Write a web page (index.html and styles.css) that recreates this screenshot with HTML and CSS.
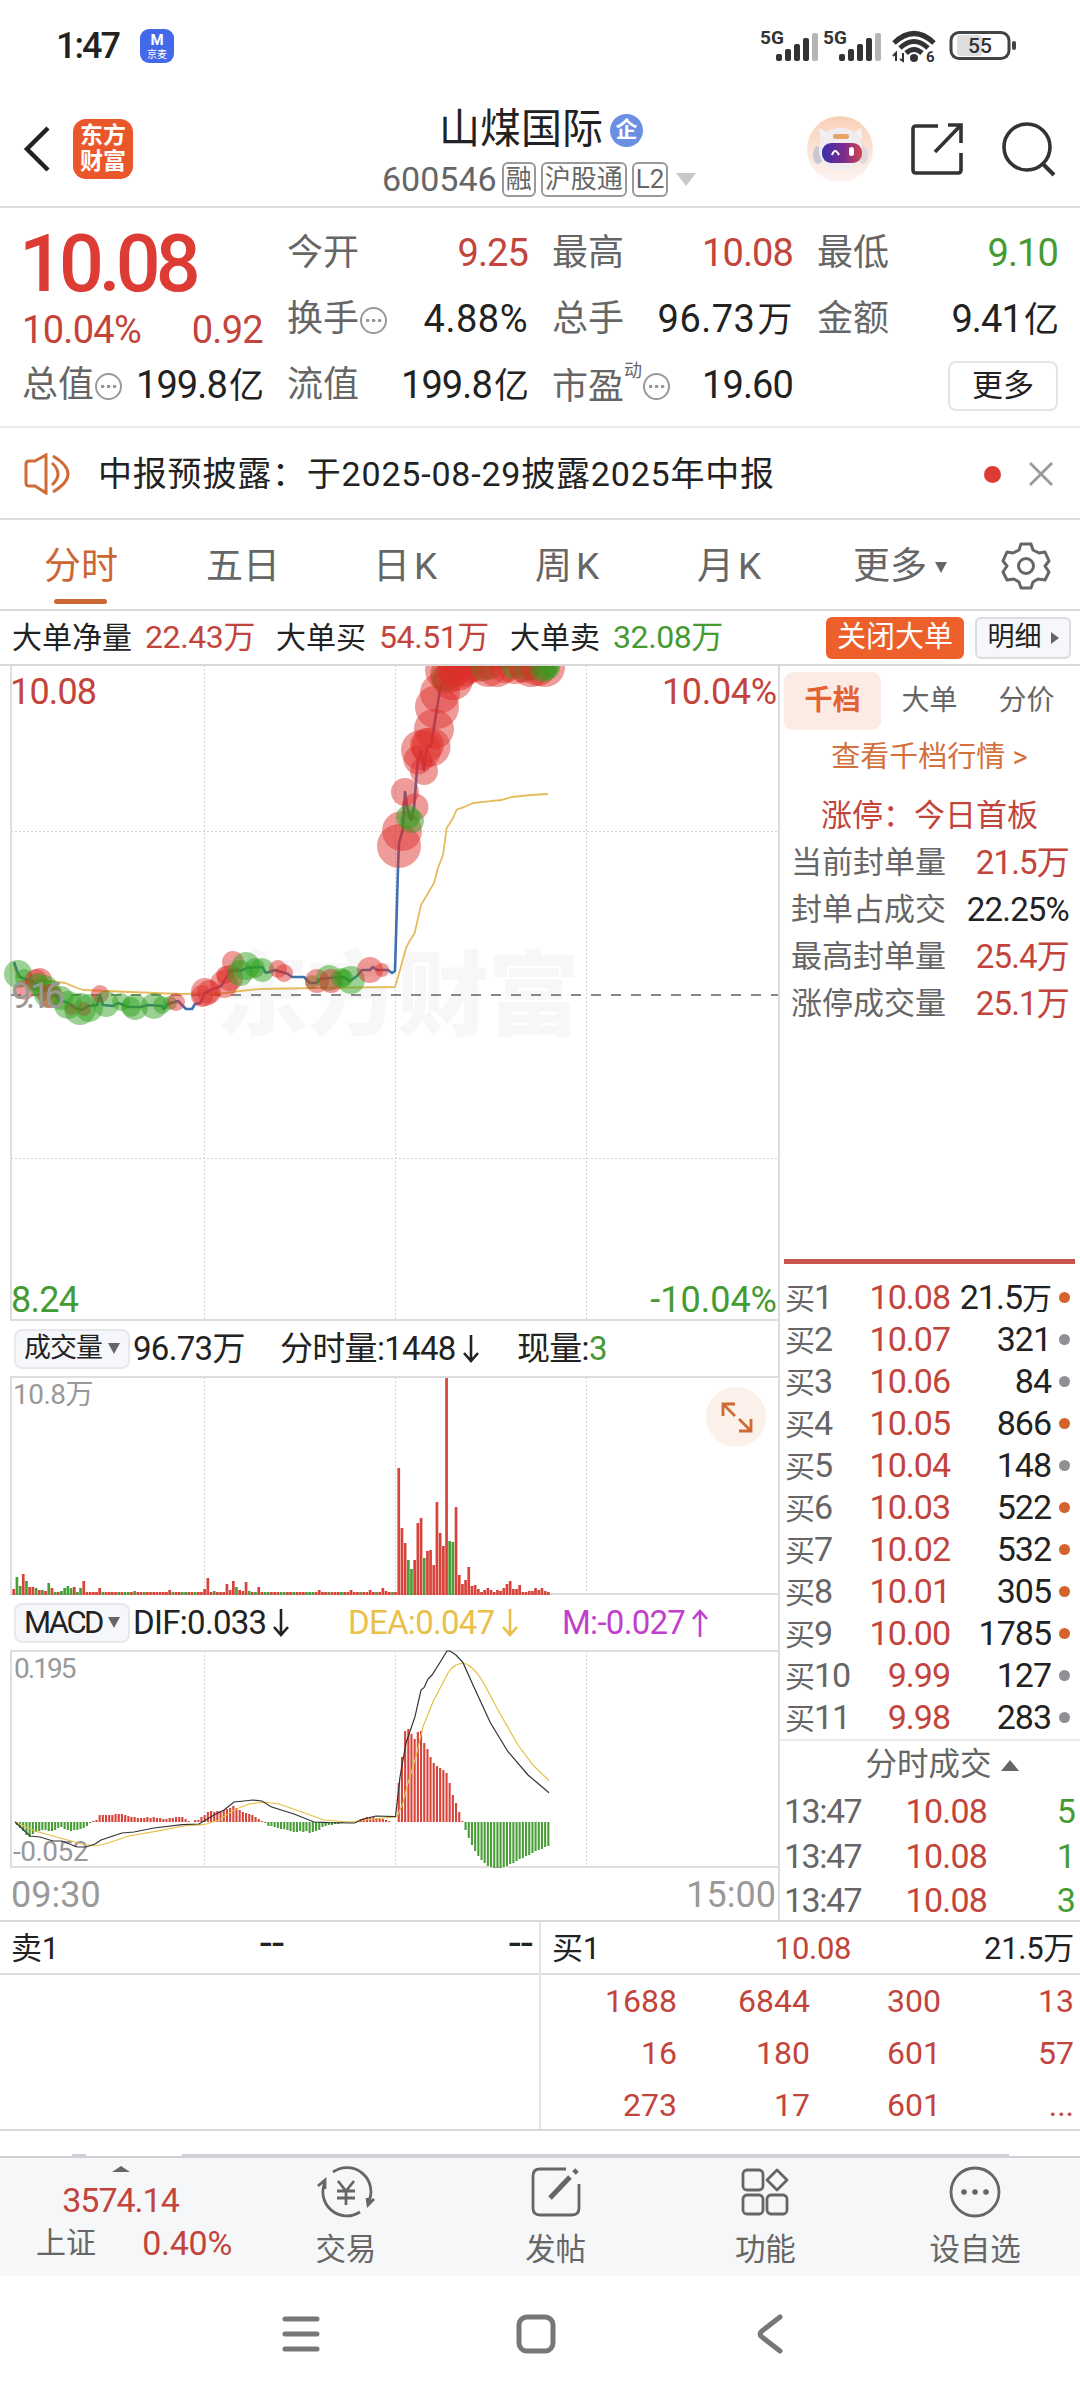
FILE: index.html
```html
<!DOCTYPE html>
<html lang="zh-CN">
<head>
    <meta charset="UTF-8">
    <meta name="viewport" content="width=device-width, initial-scale=1.0">
    <title>山煤国际 600546</title>
    <link rel="stylesheet" href="styles.css">
</head>
<body>
    <div class="status-bar">
        <span class="clock">1:47</span>
        <span class="app-chip"><b>M</b><i>京麦</i></span>
        <svg class="status-icons" width="260" height="40" viewBox="758 26 260 40">
            <g fill="#333">
                <text x="760" y="44" font-size="19" font-weight="700">5G</text>
                <text x="823" y="44" font-size="19" font-weight="700">5G</text>
                <g id="sig">
                    <rect x="776" y="54" width="6" height="7" rx="2"/>
                    <rect x="785" y="49" width="6" height="12" rx="2"/>
                    <rect x="794" y="44" width="6" height="17" rx="2"/>
                    <rect x="803" y="38" width="6" height="23" rx="2"/>
                    <rect x="812" y="33" width="6" height="28" rx="2" fill="#b5b5b5"/>
                </g>
                <use href="#sig" x="63"/>
                <circle cx="914" cy="58" r="4"/>
                <text x="926" y="62" font-size="15" font-weight="700">6</text>
                <path d="M893 56l3-3v8M903 53v8l-3-2" fill="none" stroke="#333" stroke-width="2"/>
            </g>
            <g fill="none" stroke="#333" stroke-width="5">
                <path d="M894 43q20-19 40 0"/>
                <path d="M900 48q14-13 28 0"/>
                <path d="M906 53q8-7 16 0"/>
            </g>
            <rect x="957" y="35" width="25" height="21" rx="3" fill="#ddd"/>
            <rect x="951" y="32.500" width="58" height="26" rx="8" fill="none" stroke="#444" stroke-width="3"/>
            <rect x="1012" y="41" width="4" height="9" rx="2" fill="#444"/>
            <text x="980" y="53" font-size="21" font-weight="500" fill="#333" text-anchor="middle">55</text>
        </svg>
    </div>

    <header class="header">
        <svg class="back" width="30" height="50" viewBox="0 0 30 50"><path d="M25 4L4 25l21 21" fill="none" stroke="#222" stroke-width="4.500"/></svg>
        <div class="logo">东方<br>财富</div>
        <div class="title-box">
            <div class="title">山煤国际<span class="qi">企</span></div>
            <div class="code">600546<span class="tag">融</span><span class="tag">沪股通</span><span class="tag">L2</span><i class="tri-down"></i></div>
        </div>
        <svg class="robot" width="66" height="66" viewBox="0 0 66 66">
            <defs>
                <linearGradient id="rb" x1="0" y1="0" x2="0" y2="1"><stop offset="0" stop-color="#f9d0b8"/><stop offset="1" stop-color="#fdf5f1"/></linearGradient>
                <linearGradient id="face" x1="0" y1="0" x2="1" y2="0"><stop offset="0" stop-color="#3a2fa8"/><stop offset=".55" stop-color="#7b2c8f"/><stop offset="1" stop-color="#d4454e"/></linearGradient>
            </defs>
            <circle cx="33" cy="33" r="33" fill="url(#rb)"/>
            <path d="M14 24l-2-12 9 5zM47 17l7-5 1 12z" fill="#f4f2f4"/>
            <ellipse cx="11" cy="39" rx="5" ry="9" fill="#cbc7d1"/>
            <ellipse cx="56" cy="39" rx="5" ry="9" fill="#ddd9e0"/>
            <rect x="12" y="12" width="43" height="42" rx="20" fill="#efedf0"/>
            <rect x="26" y="18" width="16" height="5" rx="2" fill="#e6a468"/>
            <rect x="15" y="27" width="40" height="20" rx="9" fill="url(#face)"/>
            <path d="M25 39q3-8 7 0" fill="none" stroke="#fff" stroke-width="2"/>
            <rect x="42" y="31" width="5" height="9" rx="2.500" fill="#fff"/>
        </svg>
        <svg class="share" width="54" height="54" viewBox="0 0 54 54"><path d="M28 4H6q-3 0-3 3v41q0 3 3 3h42q3 0 3-3V31M38 3h13v18M50 4L25 30" fill="none" stroke="#333" stroke-width="3.600"/></svg>
        <svg class="search" width="56" height="56" viewBox="0 0 56 56"><circle cx="26" cy="26" r="23" fill="none" stroke="#333" stroke-width="3.600"/><path d="M42 43l11 11" stroke="#333" stroke-width="4"/></svg>
    </header>

    <section class="quote">
        <div class="price-box">
            <div class="price">10.08</div>
            <div class="change"><span>10.04%</span><span>0.92</span></div>
        </div>
        <div class="cell"><label>今开</label><b class="up">9.25</b></div>
        <div class="cell"><label>最高</label><b class="up">10.08</b></div>
        <div class="cell"><label>最低</label><b class="down">9.10</b></div>
        <div class="cell"><label>换手</label><i class="more-dot"></i><b class="wide">4.88%</b></div>
        <div class="cell"><label>总手</label><b class="wide">96.73<em>万</em></b></div>
        <div class="cell"><label>金额</label><b>9.41<em>亿</em></b></div>
        <div class="cell"><label>总值</label><i class="more-dot"></i><b>199.8<em>亿</em></b></div>
        <div class="cell"><label>流值</label><b>199.8<em>亿</em></b></div>
        <div class="cell"><label>市盈<sup>动</sup></label><i class="more-dot"></i><b>19.60</b></div>
        <div class="cell"><span class="more-btn">更多</span></div>
    </section>

    <section class="notice">
        <svg width="48" height="42" viewBox="0 0 48 42" fill="none" stroke="#cf6c35" stroke-width="3"><path d="M2 11q0-3 3-3h6L22 2v38l-11-7H5q-3 0-3-3z"/><path d="M28 10q12 11 0 22M29 3q30 18 0 36"/></svg>
        <p>中报预披露：于2025-08-29披露2025年中报</p>
        <i class="red-dot"></i>
        <svg width="26" height="26" viewBox="0 0 26 26"><path d="M2 2l22 22M24 2L2 24" stroke="#999" stroke-width="2.800"/></svg>
    </section>

    <nav class="tabs">
        <a class="active">分时</a><a>五日</a><a>日<s>K</s></a><a>周<s>K</s></a><a>月<s>K</s></a><a class="more">更多<i class="tri-small"></i></a>
        <svg width="50" height="50" viewBox="0 0 50 50" fill="none" stroke="#666" stroke-width="3"><path d="M20 3h10l2 6 6 3 6-1 4 9-4 5 4 6-4 8-7-1-5 3-2 6H20l-2-6-5-3-7 1-4-8 4-6-4-5 4-9 6 1 6-3z" stroke-linejoin="round"/><circle cx="25" cy="25" r="7.500"/></svg>
    </nav>

    <section class="bigorder">
        <span>大单净量</span><b class="up">22.43万</b>
        <span>大单买</span><b class="up">54.51万</b>
        <span>大单卖</span><b class="down">32.08万</b>
        <a class="close-btn">关闭大单</a>
        <a class="detail-btn">明细<i class="tri-right"></i></a>
    </section>

    <main class="main">
        <div class="charts">
            <svg id="priceChart" width="778" height="655" viewBox="0 666 778 655">
                <text class="watermark" x="216" y="1028" textLength="364">东方财富</text>
            </svg>
            <div class="ind-head">
                <span class="pill"><u>成交量</u><i class="tri-ind"></i></span>
                <span class="w-vol">96.73万</span><span class="w-min">分时量:1448<svg class="arr" width="16" height="28" viewBox="0 0 16 28"><path d="M8 0v26M1 18l7 8 7-8"/></svg></span><span>现量:<b class="down">3</b></span>
            </div>
            <svg id="volChart" width="778" height="219" viewBox="0 1376 778 219"></svg>
            <div class="ind-head">
                <span class="pill"><u class="latin">MACD</u><i class="tri-ind"></i></span>
                <span class="w-dif">DIF:0.033<svg class="arr" width="16" height="28" viewBox="0 0 16 28"><path d="M8 0v26M1 18l7 8 7-8"/></svg></span><span class="w-dea">DEA:0.047<svg class="arr" width="16" height="28" viewBox="0 0 16 28"><path d="M8 0v26M1 18l7 8 7-8"/></svg></span><span class="w-m">M:-0.027<svg class="arr" width="16" height="28" viewBox="0 0 16 28"><path d="M8 28V2M1 10l7-8 7 8"/></svg></span>
            </div>
            <svg id="macdChart" width="778" height="219" viewBox="0 1650 778 219"></svg>
            <div class="times"><span>09:30</span><span>15:00</span></div>
        </div>

        <aside class="side">
            <div class="side-tabs"><a class="on">千档</a><a>大单</a><a>分价</a></div>
            <a class="side-link">查看千档行情 <span>&gt;</span></a>
            <div class="limit-title">涨停：今日首板</div>
            <dl class="limit">
                <dt>当前封单量</dt><dd class="up">21.5万</dd>
                <dt>封单占成交</dt><dd>22.25%</dd>
                <dt>最高封单量</dt><dd class="up">25.4万</dd>
                <dt>涨停成交量</dt><dd class="up">25.1万</dd>
            </dl>
            <ul class="bids" id="bids"></ul>
            <div class="ticks-title">分时成交<i class="tri-up"></i></div>
            <ul class="ticks">
                <li><span>13:47</span><b>10.08</b><em>5</em></li>
                <li><span>13:47</span><b>10.08</b><em>1</em></li>
                <li><span>13:47</span><b>10.08</b><em>3</em></li>
            </ul>
        </aside>
    </main>

    <section class="queue">
        <div class="q-sell">
            <div class="q-head"><span>卖1</span><span class="none">--</span><span class="none">--</span></div>
        </div>
        <div class="q-buy">
            <div class="q-head"><span>买1</span><span class="up">10.08</span><span>21.5万</span></div>
            <div class="q-grid">
                <span>1688</span><span>6844</span><span>300</span><span>13</span>
                <span>16</span><span>180</span><span>601</span><span>57</span>
                <span>273</span><span>17</span><span>601</span><span>...</span>
            </div>
        </div>
    </section>
    <div class="peek"><i></i><i></i></div>

    <footer class="toolbar">
        <div class="index">
            <i class="tri-up"></i>
            <b>3574.14</b>
            <p><span>上证</span><em>0.40%</em></p>
        </div>
        <a>
            <svg width="60" height="54" viewBox="-30 -27 60 54"><path d="M-13-20A24 24 0 0 1 22 11M14 20A24 24 0 0 1-21-10M28 7l-6 6-1-7M-28-6l7-6v9"/><path d="M-8-11l8 10 8-10M0-1v14M-9-1H9M-9 6H9"/></svg>
            <span>交易</span>
        </a>
        <a>
            <svg width="60" height="54" viewBox="-30 -27 60 54"><path d="M10-23h-26q-7 0-7 7v32q0 7 7 7h32q7 0 7-7V-8"/><path class="pen" d="M-6 6L14-15M18-19l3-3"/></svg>
            <span>发帖</span>
        </a>
        <a>
            <svg width="60" height="54" viewBox="-30 -27 60 54"><rect x="-22" y="-22" width="20" height="20" rx="4"/><rect x="-22" y="3" width="20" height="19" rx="4"/><rect x="2" y="3" width="20" height="19" rx="4"/><path d="M12-22l10 10-10 10-10-10z" stroke-linejoin="round"/></svg>
            <span>功能</span>
        </a>
        <a>
            <svg width="60" height="54" viewBox="-30 -27 60 54"><circle r="24"/><g fill="#666" stroke="none"><circle cx="-11" r="2.800"/><circle r="2.800"/><circle cx="11" r="2.800"/></g></svg>
            <span>设自选</span>
        </a>
    </footer>

    <div class="sysnav">
        <svg width="40" height="42" viewBox="0 0 40 42"><path d="M4 6h32M4 21h32M4 36h32"/></svg>
        <svg width="42" height="42" viewBox="0 0 42 42"><rect x="4" y="4" width="34" height="34" rx="8"/></svg>
        <svg width="28" height="42" viewBox="0 0 28 42"><path d="M24 4L6 18q-4 3 0 6l18 14"/></svg>
    </div>

    <script src="charts.js"></script>
</body>
</html>
```

FILE: styles.css
```css
* {
    box-sizing: border-box;
    margin: 0;
    padding: 0;
}
body {
    width: 1080px;
    height: 2400px;
    overflow: hidden;
    background: #fff;
    color: #222;
    font-family: Roboto, "Noto Sans CJK SC", sans-serif;
    font-size: 32px;
    line-height: 1.2;
    white-space: nowrap;
}
i, em { font-style: normal; }
b { font-weight: 400; }
s, u { text-decoration: none; }
ul { list-style: none; }
svg { display: block; flex: none; }
.up { color: #c2443b; }
.down { color: #459a32; }

/* status bar */
.status-bar {
    display: flex;
    align-items: center;
    height: 92px;
    padding: 0 62px 0 56px;
}
.clock {
    width: 84px;
    padding-top: 2px;
    font-size: 36px;
    font-weight: 500;
    letter-spacing: -2px;
}
.app-chip {
    display: flex;
    flex-direction: column;
    align-items: center;
    width: 34px;
    height: 34px;
    border-radius: 9px;
    background: #4169ea;
    color: #fff;
}
.app-chip b { font-size: 15px; line-height: 19px; font-weight: 700; margin-top: 2px; }
.app-chip i { font-size: 10px; line-height: 9px; }
.status-icons { margin-left: auto; }

/* header */
.header {
    display: flex;
    align-items: center;
    height: 116px;
    padding: 0 23px 0 23px;
    border-bottom: 2px solid #dcdcdc;
}
.back { margin-right: 20px; }
.logo {
    width: 60px;
    height: 60px;
    padding-top: 4px;
    border-radius: 13px;
    background: #ea572a;
    color: #fff;
    font-size: 23px;
    font-weight: 600;
    line-height: 26px;
    text-align: center;
}
.title-box { flex: 1; padding: 6px 0 0 249px; }
.title {
    display: flex;
    align-items: center;
    height: 54px;
    margin-left: 57px;
    font-size: 41px;
    padding-top: 3px;
}
.qi {
    width: 33px;
    height: 33px;
    margin-left: 7px;
    border-radius: 50%;
    background: #6b8fe3;
    color: #fff;
    font-size: 22px;
    font-weight: 700;
    line-height: 32px;
    text-align: center;
}
.code {
    display: flex;
    align-items: center;
    height: 47px;
    color: #666;
    font-size: 34px;
}
.tag {
    height: 35px;
    margin-left: 5px;
    padding: 0 2px;
    border: 2px solid #999;
    border-radius: 6px;
    font-size: 26px;
    line-height: 31px;
}
.tri-down {
    margin-left: 8px;
    border: 10px solid transparent;
    border-top: 13px solid #c8c8c8;
    border-bottom: 0;
}
.robot { margin-right: 37px; }
.share { margin-right: 37px; }

/* quote */
.quote {
    display: grid;
    grid-template-columns: repeat(4, 1fr);
    grid-template-rows: repeat(3, 66px);
    column-gap: 24px;
    height: 220px;
    padding: 13px 22px 0;
    border-bottom: 2px solid #ececec;
}
.price-box { grid-row: span 2; }
.price {
    height: 86px;
    margin-left: -3px;
    color: #dc3c34;
    font-size: 79px;
    font-weight: 500;
    line-height: 86px;
    letter-spacing: -5px;
}
.change {
    display: flex;
    justify-content: space-between;
    color: #c2443b;
    font-size: 38px;
    line-height: 46px;
    letter-spacing: -.700px;
}
.cell {
    display: flex;
    align-items: center;
}
.cell label { color: #666; font-size: 36px; }
.cell b { margin-left: auto; font-size: 38px; letter-spacing: -.900px; }
.cell .wide { letter-spacing: .500px; }
.cell em { margin-left: 2px; font-size: 35px; }
.cell sup {
    font-size: 18px;
    line-height: 1;
    vertical-align: 22px;
}
/* three dots inside a ring */
.more-dot {
    width: 27px;
    height: 27px;
    margin-left: 1px;
    border: 2px solid #999;
    border-radius: 50%;
    background: radial-gradient(circle, #999 1.600px, transparent 2px) center / 5.500px 23px content-box no-repeat,
        radial-gradient(circle, #999 1.600px, transparent 2px) 3px center / 5.500px 23px no-repeat,
        radial-gradient(circle, #999 1.600px, transparent 2px) 15px center / 5.500px 23px no-repeat;
}
.more-btn {
    width: 110px;
    height: 50px;
    margin-left: auto;
    border: 2px solid #e4e4e4;
    border-radius: 8px;
    font-size: 31px;
    line-height: 46px;
    text-align: center;
}

/* notice */
.notice {
    display: flex;
    align-items: center;
    height: 92px;
    padding: 2px 26px 0 24px;
    border-bottom: 2px solid #dcdcdc;
}
.notice p { margin-left: 26px; font-size: 34px; letter-spacing: .800px; }
.red-dot {
    width: 17px;
    height: 17px;
    margin: 0 27px 0 auto;
    border-radius: 50%;
    background: #dc3c34;
}

/* period tabs */
.tabs {
    display: flex;
    align-items: center;
    height: 91px;
    border-bottom: 2px solid #d8d8d8;
    color: #666;
    font-size: 37px;
}
.tabs a {
    display: flex;
    align-items: center;
    justify-content: center;
    position: relative;
    width: 162px;
    height: 90px;
    padding-top: 5px;
}
.tabs s { margin-left: 4px; }
.tabs .active { color: #cc6633; }
.tabs .active::after {
    content: "";
    position: absolute;
    left: 54px;
    bottom: 6px;
    width: 53px;
    height: 5px;
    border-radius: 3px;
    background: #cc6633;
}
.tabs .more { width: 180px; }
.tabs svg { margin: 3px 0 0 11px; }
.tri-small {
    margin-left: 8px;
    border: 6px solid transparent;
    border-top: 11px solid #666;
    border-bottom: 0;
}

/* big order strip */
.bigorder {
    display: flex;
    align-items: center;
    height: 55px;
    padding: 0 9px 0 12px;
    border-bottom: 2px solid #d8d8d8;
    font-size: 30px;
}
.bigorder b {
    margin: 0 21px 0 13px;
    font-size: 32px;
    letter-spacing: -.400px;
}
.close-btn {
    width: 138px;
    height: 42px;
    margin-left: auto;
    border-radius: 6px;
    background: #ed602b;
    color: #fff;
    font-size: 29px;
    line-height: 41px;
    text-align: center;
}
.detail-btn {
    display: flex;
    align-items: center;
    justify-content: center;
    width: 96px;
    height: 42px;
    margin-left: 11px;
    border: 2px solid #dadce2;
    border-radius: 6px;
    background: #f6f7fa;
    font-size: 27px;
}
.tri-right {
    margin-left: 9px;
    border: 6px solid transparent;
    border-left: 8px solid #666;
    border-right: 0;
}

/* charts */
.main {
    display: flex;
    height: 1256px;
    border-bottom: 2px solid #d8d8d8;
}
.charts { width: 778px; }
.charts svg { overflow: hidden; }
.grid { stroke: #d4d4d4; stroke-width: 1; stroke-dasharray: 2 2; }
.frame { stroke: #dedede; stroke-width: 2; fill: none; }
.axis-up { fill: #c2443b; font-size: 36px; }
.axis-down { fill: #459a32; font-size: 36px; }
.axis-mute { fill: #999; font-size: 36px; }
.axis-small { fill: #999; font-size: 28px; letter-spacing: -.500px; }
.watermark { fill: #f7f7f7; font-size: 92px; font-weight: 900; }
.ind-head {
    display: flex;
    align-items: center;
    height: 55px;
    padding-left: 14px;
    font-size: 33px;
    letter-spacing: -.700px;
}
.ind-head span { display: flex; align-items: center; }
.pill {
    width: 116px;
    height: 40px;
    margin-right: 3px;
    padding-left: 8px;
    border: 2px solid #e6e8ec;
    border-radius: 8px;
    background: #f6f7fa;
}
.pill u { width: 84px; font-size: 27px; letter-spacing: -1px; }
.pill .latin { font-size: 31px; letter-spacing: -2.500px; }
.tri-ind {
    border: 6px solid transparent;
    border-top: 11px solid #666;
    border-bottom: 0;
}
.arr {
    margin-left: 7px;
    fill: none;
    stroke: currentColor;
    stroke-width: 2.600;
}
.w-vol { width: 147px; }
.w-min { width: 237px; }
.w-dif { width: 215px; }
.w-dea { width: 214px; color: #e8c04a; }
.w-m { color: #c03fcb; }
.times {
    display: flex;
    justify-content: space-between;
    padding: 5px 2px 0 11px;
    color: #999;
    font-size: 36px;
}

/* right panel */
.side {
    width: 302px;
    border-left: 2px solid #dcdcdc;
    padding: 6px 5px 0 4px;
}
.side-tabs { display: flex; }
.side-tabs a {
    width: 97px;
    height: 58px;
    border-radius: 9px;
    color: #666;
    font-size: 28px;
    line-height: 58px;
    text-align: center;
}
.side-tabs .on { background: #fcebe4; color: #e2632f; font-weight: 700; }
.side-link {
    display: block;
    height: 54px;
    color: #d4703c;
    font-size: 29px;
    line-height: 54px;
    text-align: center;
}
.limit-title {
    height: 54px;
    color: #c2443b;
    font-size: 31px;
    line-height: 64px;
    text-align: center;
}
.limit {
    display: grid;
    grid-template-columns: auto auto;
    justify-content: space-between;
    height: 426px;
    padding: 0 6px 0 7px;
    grid-auto-rows: 47px;
    border-bottom: 5px solid #c9544d;
    line-height: 49px;
}
.limit dt { color: #666; font-size: 31px; }
.limit dd { text-align: right; font-size: 33px; letter-spacing: -.800px; }
.bids { padding: 12px 6px 0 1px; height: 475px; }
.bids li {
    display: grid;
    grid-template-columns: 60px 105px 101px 18px;
    align-items: center;
    height: 42px;
    font-size: 34px;
    letter-spacing: -1px;
}
.bids span { color: #666; }
.bids span u, .bids em u { font-size: 30px; }
.bids b { color: #c2443b; text-align: right; }
.bids em { text-align: right; }
.bids i {
    width: 11px;
    height: 11px;
    margin-left: 8px;
    border-radius: 50%;
    background: #8f8f94;
}
.bids .hot { background: #d4622b; }
.ticks-title {
    display: flex;
    align-items: center;
    justify-content: center;
    height: 50px;
    margin: 0 -5px 0 -4px;
    padding-left: 24px;
    border-top: 2px solid #ececec;
    color: #666;
    font-size: 31.500px;
}
.tri-up {
    margin-left: 9px;
    border: 9px solid transparent;
    border-bottom: 11px solid #666;
    border-top: 0;
}
.ticks li {
    display: grid;
    grid-template-columns: 80px 123px 88px;
    height: 44.500px;
    font-size: 34px;
    line-height: 45px;
    letter-spacing: -.800px;
}
.ticks span { color: #666; letter-spacing: -1.500px; }
.ticks b { color: #c2443b; text-align: right; }
.ticks em { color: #459a32; text-align: right; }

/* order queue */
.queue {
    display: flex;
    height: 209px;
    border-bottom: 2px solid #d8d8d8;
}
.q-sell { width: 541px; border-right: 2px solid #e4e4e4; }
.q-buy { width: 539px; }
.q-head {
    display: grid;
    grid-template-columns: 1fr 1fr 1fr;
    height: 53px;
    padding: 0 6px 0 11px;
    border-bottom: 2px solid #dedede;
    font-size: 31px;
    line-height: 53px;
    letter-spacing: -.300px;
}
.q-head span:nth-child(2) { text-align: center; }
.q-head span:nth-child(3) { text-align: right; }
.q-head .none { font-size: 44px; line-height: 43px; letter-spacing: 0; }
.q-grid {
    display: grid;
    grid-template-columns: 136px 133px 131px 133px;
    grid-auto-rows: 52px;
    color: #c2443b;
    line-height: 53px;
    text-align: right;
}
.peek {
    display: flex;
    align-items: flex-end;
    height: 27px;
    padding-left: 72px;
    border-bottom: 2px solid #cfd1d6;
}
.peek i { width: 14px; height: 2px; background: #cfd1d6; }
.peek i + i { width: 827px; margin-left: 96px; }

/* bottom toolbar */
.toolbar {
    display: flex;
    height: 118px;
    background: #f6f7f9;
    color: #666;
}
.index {
    display: flex;
    flex-direction: column;
    align-items: center;
    width: 241px;
    padding-top: 8px;
}
.index .tri-up { margin: 0; border-width: 0 9px 6px; }
.index b { margin-top: 8px; color: #c2443b; font-size: 34px; letter-spacing: -1px; }
.index p {
    display: flex;
    justify-content: space-between;
    align-items: center;
    align-self: stretch;
    padding: 2px 9px 0 36px;
    font-size: 30px;
}
.index em { color: #c2443b; font-size: 34px; letter-spacing: -.300px; }
.toolbar a {
    display: flex;
    flex-direction: column;
    align-items: center;
    width: 209.750px;
    padding-top: 7px;
    font-size: 30.500px;
}
.toolbar a span { margin-top: 13px; }
.toolbar a svg { fill: none; stroke: #666; stroke-width: 2.800; }
.toolbar .pen { stroke-width: 5; }

/* system navigation */
.sysnav {
    display: flex;
    align-items: center;
    height: 116px;
    padding-left: 281px;
}
.sysnav svg { fill: none; stroke: #777; stroke-width: 5; stroke-linecap: round; }
.sysnav svg + svg { margin-left: 194px; }
.sysnav svg:last-child { margin-left: 199px; }
```

FILE: charts.js
```js
const NS = 'http://www.w3.org/2000/svg';
const RED = '#d8433a';
const GREEN = '#4a9e38';
const X0 = 13.7;
const STEP = 3.182;

function add(svg, tag, attrs, text) {
    const el = document.createElementNS(NS, tag);
    for (const k in attrs) el.setAttribute(k, attrs[k]);
    if (text) el.textContent = text;
    svg.appendChild(el);
    return el;
}

// Frame and the three dotted verticals shared by all panels
function frame(svg, top, bottom) {
    [204.5, 395.5, 586.5].forEach(x => add(svg, 'line', { class: 'grid', x1: x, x2: x, y1: top, y2: bottom }));
    add(svg, 'path', { class: 'frame', d: `M778 ${top}H11V${bottom}H778` });
}

// ---- price ----
const price = document.getElementById('priceChart');
frame(price, 665, 1320);
[831.5, 1158.5].forEach(y => add(price, 'line', { class: 'grid', x1: 11, x2: 778, y1: y, y2: y }));
add(price, 'line', { x1: 11, x2: 778, y1: 995, y2: 995, stroke: '#888', 'stroke-width': 2, 'stroke-dasharray': '10 10' });

add(price, 'polyline', {
    fill: 'none', stroke: '#e6bb5c', 'stroke-width': 1.8,
    points: '14,964 17,977 30,980 50,981 65,983 77,988 84,990 130,992 180,994 225,993 240,991 260,989 320,988 395,987 400,970 406,948 409,942 414.700,933 421,905 434,883 438,868 443,855 446.700,828 453,818 456.700,809.700 465,806.700 473,803 486,801.700 501,800 512,797 531,795 548,794'
});
add(price, 'polyline', {
    fill: 'none', stroke: '#4170b0', 'stroke-width': 2.6, 'stroke-linejoin': 'round',
    points: '14,962 17,971 20,977 28,980 36,984 45,989 52,993 60,1000 68,1003 75,1008 82,1010 88,1006 97,1005 100,995 103,1005 113,1006 118,1003 121,1004 128,1007 141,1007 148,1005 162,1006 164,1009 168,1004 178,1001 182,1005 186,1009 192,1009 195,1004 200,1003 205,993 211,990 221,986 226,978 231,970 240,971 247,968 262,967 266,973 275,970 288,974 292,977 304,977 310,983 316,983 320,979 330,978 343,977 350,981 357,976 362,970 370,970 373,967 377,970 388,970 392,973 395,971 398,868 399,843 402.700,830 405,792 407.700,810 411,820 414,808 416.700,773 417.700,760 421,750.700 424,770 427,747 431,745.700 436.700,710 440,690 445,673 447,667 451,675 455,667 547,667'
});

// big-order bubbles: colour, x, y, radius
const bubbles = `g 18 974 14,g 24 978 9,r 25 990 10,r 36 980 11,r 40 980 12,g 38 984 11,g 45 988 13,g 48 994 14,r 50 996 12,
g 61 998 12,g 68 1005 14,r 71 1009 6,g 80 1009 16,r 84 1009 7,g 89 1008 14,r 100 994 9,g 106 1004 13,g 121 1002 9,g 131 1007 10,
g 135 1007 13,g 154 1006 13,g 162 1005 9,g 170 1003 7,r 176 1002 9,r 205 992 14,r 202 996 11,r 209 992 12,r 224 984 14,r 230 978 13,
r 225 975 9,r 233 962 11,g 240 973 13,g 246 966 14,g 255 968 10,g 262 970 12,r 278 969 9,r 284 973 9,g 312 982 7,r 317 981 12,
g 329 978 13,r 331 981 12,g 341 978 10,g 344 978 9,g 351 980 14,r 370 970 13,r 382 970 7,r 399 846 22,r 402 831 20,r 405 792 14,
r 415 807 13.500,g 408 817 12,g 412 821 12,r 424 771 14,r 418 760 14.500,r 421 750 20,r 427 745 17,r 431 747 19.500,r 434 729 20,
r 437 707 22,r 440 693 20,r 445 670 20,g 445 678 14,r 448 675 18,r 453 680 20,r 458 672 19,r 463 668 19,r 455 668 18,r 470 667 16,
r 478 666 16,g 484 667 14,g 489 667 13,r 488 668 19,r 497 667 20,r 505 667 16,r 515 666 18,g 514 667 12,r 524 667 16,g 526 668 13,
g 530 668 12,r 531 667 20,r 538 668 18,r 545 667 20,g 543 668 14,g 547 667 13,g 549 667 10`;
bubbles.split(',').forEach(s => {
    const [c, x, y, r] = s.trim().split(' ');
    add(price, 'circle', { cx: x, cy: y, r: r, fill: c === 'r' ? '#de2f2a' : '#2da01e', 'fill-opacity': .48 });
});
add(price, 'text', { class: 'axis-up', x: 10, y: 704, textLength: 87 }, '10.08');
add(price, 'text', { class: 'axis-up', x: 777, y: 704, 'text-anchor': 'end', textLength: 115 }, '10.04%');
add(price, 'text', { class: 'axis-mute', x: 11, y: 1008, textLength: 54 }, '9.16');
add(price, 'text', { class: 'axis-down', x: 11, y: 1312, textLength: 68 }, '8.24');
add(price, 'text', { class: 'axis-down', x: 777, y: 1312, 'text-anchor': 'end' }, '-10.04%');

// ---- volume ----
const vol = document.getElementById('volChart');
frame(vol, 1377, 1594);
const volumes = Array(169).fill(3);
[6, 18, 9, 21, 14, 8, 8, 7, 5, 5, 4, 12, 7, 3, 3, 4, 7, 9, 7, 8, 3, 7, 14].forEach((v, i) => volumes[i] = v);
Object.assign(volumes, { 27: 7, 38: 4, 49: 5, 60: 6, 61: 17, 63: 4, 67: 11, 68: 5, 69: 14, 70: 8, 71: 5, 72: 4, 73: 13, 74: 4, 77: 8, 96: 5, 106: 5, 112: 5, 116: 7, 117: 4 });
[127, 67, 52, 35, 26, 35, 72, 77, 37, 44, 45, 30, 93, 62, 49, 217, 54, 53, 88, 20, 11, 15, 28, 9, 10, 6, 3, 5, 7, 5, 3, 5, 4, 7, 11, 14, 6, 6, 10, 3, 3, 4, 4, 7, 5, 7, 4, 3].forEach((v, i) => volumes[121 + i] = v);
const greenBars = new Set([1, 2, 4, 7, 9, 11, 13, 15, 16, 17, 18, 20, 21, 28, 33, 35, 36, 38, 41, 50, 53, 54, 57, 63, 70, 74, 76, 79, 80, 84, 85, 88, 92, 93, 94, 99, 103, 109, 114, 119, 124, 125, 129, 137, 138]);
volumes.forEach((v, i) => add(vol, 'rect', {
    x: (X0 + STEP * i - 1.3).toFixed(1), y: 1595 - v, width: 2.7, height: v, fill: greenBars.has(i) ? GREEN : RED
}));
add(vol, 'text', { class: 'axis-small', x: 13, y: 1404 }, '10.8万');
add(vol, 'circle', { cx: 736, cy: 1417, r: 30, fill: '#fbf0ea' });
add(vol, 'path', { d: 'M723 1416V1404H735M724 1405L735 1416M751 1419V1431H739M750 1430L739 1419', fill: 'none', stroke: '#d06a35', 'stroke-width': 2.8 });

// ---- MACD ----
const macd = document.getElementById('macdChart');
frame(macd, 1651, 1867);
const hist = [0, -3, -6, -9, -13, -15, -12, -10, -9, -8, -8, -9, -9, -8, -6, -5, -7, -8, -9, -8, -8, -7, -6, -4, -1, 1, 2, 7, 7, 7, 7, 7, 8, 8, 8, 7, 6, 5, 5, 4,
    4, 4, 5, 4, 5, 4, 4, 3, 3, 4, 4, 5, 5, 5, 3, 1, 0, 2, 2, 5, 7, 10, 11, 10, 11, 11, 12, 13, 14, 16, 14, 12, 10, 9, 8, 7, 5, 3, 1, -1,
    -4, -4, -5, -6, -7, -7, -8, -9, -10, -10, -9, -10, -9, -11, -10, -9, -8, -5, -4, -3, -3, -2, -2, -1, 0, 0, 0, 0, 1, 3, 4, 5, 5, 5, 4, 4, 3, 2, 1, 0,
    0, 39, 65, 91, 93, 88, 83, 90, 91, 79, 73, 65, 59, 56, 54, 52, 49, 39, 27, 19, 10, 1, -8, -16, -23, -29, -34, -38, -41, -44, -45, -46, -46, -46, -45, -44, -42, -41, -39, -37,
    -36, -34, -33, -31, -29, -28, -27, -25, -24];
hist.forEach((v, i) => add(macd, 'rect', {
    x: (X0 + STEP * i - 1).toFixed(1), y: v > 0 ? 1822 - v : 1822, width: 2.1, height: Math.abs(v), fill: v > 0 ? RED : GREEN
}));
add(macd, 'text', { class: 'axis-small', x: 14, y: 1678, textLength: 62 }, '0.195');
add(macd, 'text', { class: 'axis-small', x: 13, y: 1861 }, '-0.052');
add(macd, 'polyline', {
    fill: 'none', stroke: '#e5c043', 'stroke-width': 1.2,
    points: '15,1822 35,1831 82,1844 95,1846 105,1844 129,1836 154,1831.700 184,1826 204,1824.700 219,1820 234,1810 249,1804 264,1802 279,1804 299,1811 324,1820 349,1822 373.500,1819 397,1816.700 403,1803 408,1783 416,1756.700 423,1726.700 433,1701.700 448,1673 452,1668 456,1665 462,1663 466,1664 471,1667 477,1673 483,1681.700 498,1710 518,1745 533,1765 549,1780.700'
});
add(macd, 'polyline', {
    fill: 'none', stroke: '#333', 'stroke-width': 1.2,
    points: '15,1822 30,1836 40,1837 53,1841 62,1841 77,1847 86,1847 95,1844 101,1840 122,1833 134,1832 154,1828 182,1824.700 199,1824 214,1815 224,1810 234,1802 244,1801 252.500,1800 262,1801 271,1806.700 294,1814 314,1822 329,1822.700 354.600,1823 363.500,1819 376,1816 395.500,1816.700 400,1777 406,1743 415,1716.700 421,1690 424,1687.700 428,1679 432,1675 441,1660.700 447,1651 450,1651 456,1655 463,1662.700 473,1685 490.500,1723 508,1751.700 528,1775 549,1792.700'
});

// ---- bid ladder ----
const bids = [['10.08', '21.5万', 1], ['10.07', '321', 0], ['10.06', '84', 0], ['10.05', '866', 1], ['10.04', '148', 0], ['10.03', '522', 1],
    ['10.02', '532', 1], ['10.01', '305', 1], ['10.00', '1785', 1], ['9.99', '127', 0], ['9.98', '283', 0]];
document.getElementById('bids').innerHTML = bids.map(([p, q, hot], i) =>
    `<li><span><u>买</u>${i + 1}</span><b>${p}</b><em>${q.replace('万', '<u>万</u>')}</em><i class="${hot ? 'hot' : ''}"></i></li>`).join('');
```
